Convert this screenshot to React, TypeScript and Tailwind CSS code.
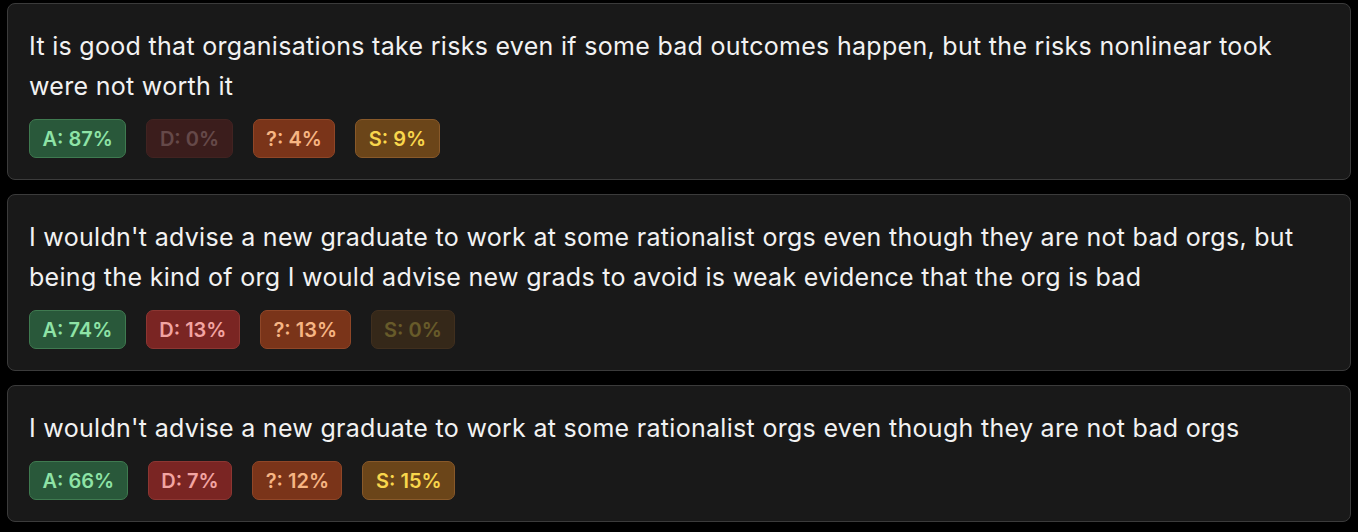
import React from "react";

type Kind = "A" | "D" | "?" | "S";

interface Statement {
  id: string;
  text: string;
  votes: Record<Kind, number>;
}

const STATEMENTS: Statement[] = [
  {
    id: "s1",
    text: "It is good that organisations take risks even if some bad outcomes happen, but the risks nonlinear took were not worth it",
    votes: { A: 87, D: 0, "?": 4, S: 9 },
  },
  {
    id: "s2",
    text: "I wouldn't advise a new graduate to work at some rationalist orgs even though they are not bad orgs, but being the kind of org I would advise new grads to avoid is weak evidence that the org is bad",
    votes: { A: 74, D: 13, "?": 13, S: 0 },
  },
  {
    id: "s3",
    text: "I wouldn't advise a new graduate to work at some rationalist orgs even though they are not bad orgs",
    votes: { A: 66, D: 7, "?": 12, S: 15 },
  },
];

const KINDS: Kind[] = ["A", "D", "?", "S"];

// badge colours per vote kind
const BADGE: Record<Kind, string> = {
  A: "bg-[#29583a] border-[#3f7a50] text-[#8ee3a6]",
  D: "bg-[#7a2523] border-[#8c3632] text-[#f2a4a2]",
  "?": "bg-[#7a3419] border-[#8f4627] text-[#f7b583]",
  S: "bg-[#6b4519] border-[#88592a] text-[#f9d64c]",
};

const Badge = ({ kind, value }: { kind: Kind; value: number }) => (
  <span
    className={`inline-flex items-center h-[39px] px-[12.5px] rounded-[7px] border text-[20px] font-semibold leading-none ${BADGE[kind]} ${
      value === 0 ? "opacity-35" : ""
    }`}
  >
    {kind}: {value}%
  </span>
);

export default function App() {
  return (
    <div
      className="min-h-screen bg-black pt-[3px] px-[7px] pb-2 flex flex-col gap-[14px]"
      style={{ fontFamily: "Inter, 'Noto Sans', sans-serif" }}
    >
      {STATEMENTS.map((s) => (
        <div
          key={s.id}
          className="bg-[#191919] border border-[#3b3b3b] rounded-[8px] pt-[22px] pb-[21px] px-[21px] flex flex-col gap-[13px]"
        >
          <p className="text-[25px] leading-[40px] tracking-[0.3px] text-[#f2f2f2]">{s.text}</p>
          <div className="flex gap-[20px]">
            {KINDS.map((k) => (
              <Badge key={k} kind={k} value={s.votes[k]} />
            ))}
          </div>
        </div>
      ))}
    </div>
  );
}
